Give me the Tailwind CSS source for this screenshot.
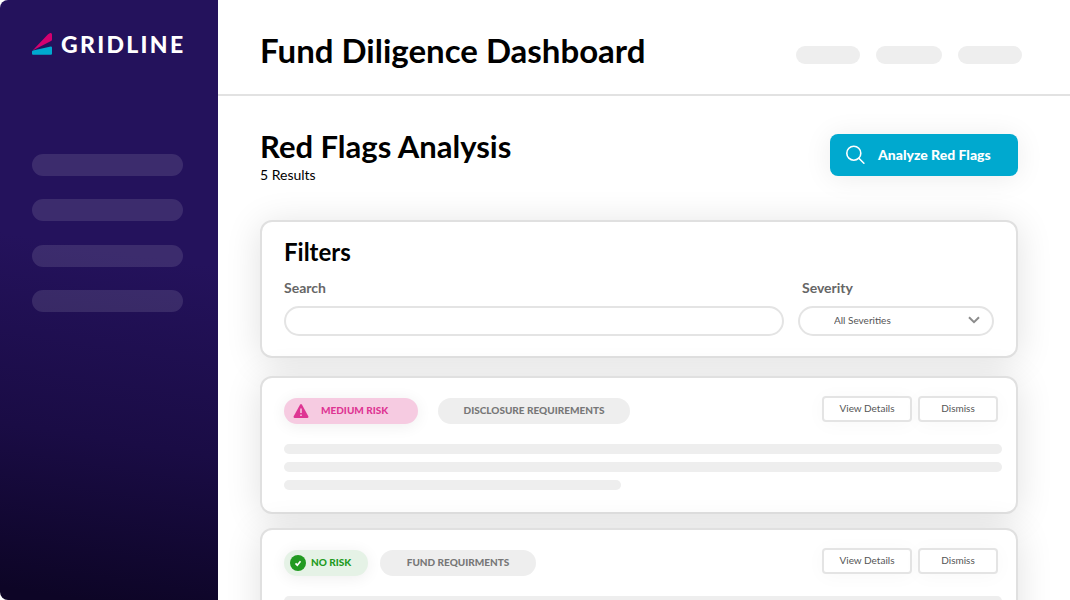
<!DOCTYPE html>
<html lang="en">
<head>
    <meta charset="UTF-8">
    <meta name="viewport" content="width=device-width, initial-scale=1.0">
    <title>Fund Diligence Dashboard</title>
    <script src="https://cdn.jsdelivr.net/npm/@tailwindcss/browser@4"></script>
</head>
<body class="flex h-screen overflow-hidden bg-white font-['Lato',sans-serif] text-black">

<!-- Sidebar -->
<aside class="w-[218px] shrink-0 rounded-l-lg bg-linear-[189deg,#24125c_42%,#1a0c45_72%,#0d0526_98%] pl-8 pr-[35px] pt-7">
    <a href="#" class="flex h-8 items-center gap-[9px] text-[23px] font-black leading-8 tracking-widest text-white">
        <svg viewBox="0 0 20 22" class="h-[22px] w-5 shrink-0">
            <path d="M.6 17.6 15.8 1.5Q19.6 -1.6 20 1.6V6.4Q20 7.6 19 8.1Z" fill="#d4006f"/>
            <path d="M1 17.4 18.8 13.6Q20 13.5 20 14.6V20.8Q20 21.8 19 21.8H1Q0 21.8 0 20.8V18.6Q0 17.6 1 17.4Z" fill="#00a9cf"/>
        </svg>
        GRIDLINE
    </a>
    <nav class="mt-[94px] flex h-[158px] flex-col justify-between" aria-label="Main">
        <a href="#" class="h-[22px] rounded-full bg-white/11"></a>
        <a href="#" class="h-[22px] rounded-full bg-white/11"></a>
        <a href="#" class="h-[22px] rounded-full bg-white/11"></a>
        <a href="#" class="h-[22px] rounded-full bg-white/11"></a>
    </nav>
</aside>

<div class="min-w-0 flex-1">
    <!-- Top bar -->
    <header class="flex h-24 items-center justify-between border-b-2 border-[#e2e2e2] pl-[42px] pr-12 pt-1.5">
        <h1 class="text-[33px] font-bold leading-10">Fund Diligence Dashboard</h1>
        <div class="mt-2.5 flex gap-4">
            <span class="h-[18px] w-16 rounded-full bg-[#eee]"></span>
            <span class="h-[18px] w-[66px] rounded-full bg-[#eee]"></span>
            <span class="h-[18px] w-16 rounded-full bg-[#eee]"></span>
        </div>
    </header>

    <main class="pl-[42px] pr-[52px] pt-8">
        <div class="flex items-start justify-between">
            <div>
                <h2 class="text-[31px] font-bold leading-9">Red Flags Analysis</h2>
                <p class="text-sm leading-[22px]">5 Results</p>
            </div>
            <button class="mt-1.5 flex h-[42px] w-[188px] items-center gap-3 rounded-lg bg-[#00a9cf] pl-4 text-sm font-black text-white shadow-[0_2px_28px_rgba(0,0,0,0.08)]">
                <svg viewBox="0 0 20 20" class="size-5" fill="none" stroke="currentColor" stroke-width="1.6" stroke-linecap="round">
                    <circle cx="7.8" cy="8.2" r="7"/>
                    <path d="m12.9 13.3 5 4.9"/>
                </svg>
                Analyze Red Flags
            </button>
        </div>

        <!-- Filters -->
        <section class="mt-[34px] h-[138px] rounded-xl border-2 border-[#e0e0e0] bg-white px-[22px] pt-3.5 shadow-[0_4px_36px_rgba(0,0,0,0.12)]">
            <h3 class="text-2xl font-bold leading-8">Filters</h3>
            <div class="mt-2.5 grid grid-cols-[1fr_196px] gap-x-3.5 gap-y-2 text-sm">
                <label for="search" class="font-bold leading-5 text-[#666]">Search</label>
                <label for="severity" class="pl-1 font-bold leading-5 text-[#666]">Severity</label>
                <input id="search" type="text" class="h-[30px] rounded-full border-2 border-[#e4e4e4] px-4">
                <div class="relative">
                    <select id="severity" class="h-[30px] w-full appearance-none rounded-full border-2 border-[#e4e4e4] pb-0.5 pl-[34px] text-[10px] text-[#555]">
                        <option>All Severities</option>
                        <option>Medium Risk</option>
                        <option>No Risk</option>
                    </select>
                    <svg viewBox="0 0 12 8" class="pointer-events-none absolute right-3.5 top-2.5 h-2 w-3" fill="none" stroke="#8c8c8c" stroke-width="2">
                        <path d="m1 1.2 5 5 5-5"/>
                    </svg>
                </div>
            </div>
        </section>

        <!-- Red flag results -->
        <article class="mt-[18px] h-[138px] rounded-xl border-2 border-[#e0e0e0] bg-white pl-[22px] pr-3.5 pt-[18px] shadow-[0_4px_36px_rgba(0,0,0,0.12)]">
            <div class="flex items-start justify-between pr-1">
                <div class="mt-0.5 flex gap-5 text-[10px] font-black">
                    <span class="flex h-[26px] w-[134px] items-center gap-3 rounded-full bg-[#f6cbe1] pl-[9px] text-[#de3593] shadow-[0_2px_16px_rgba(0,0,0,0.07)]">
                        <svg viewBox="0 0 16 14" class="h-3.5 w-4">
                            <path d="M7 .7Q8 -.5 9 .7L15.3 12.3Q15.9 13.8 14.5 13.9H1.5Q.1 13.8.7 12.3Z" fill="#de3593"/>
                            <path d="M8 4.4v4.5M8 10.6v1.5" stroke="#f6cbe1" stroke-width="1.5"/>
                        </svg>
                        <span class="pb-0.5">MEDIUM RISK</span>
                    </span>
                    <span class="flex h-[26px] w-48 items-center justify-center rounded-full bg-[#eee] pb-0.5 text-[#777]">DISCLOSURE REQUIREMENTS</span>
                </div>
                <div class="flex gap-1.5 text-[10px] text-[#555]">
                    <button class="h-[26px] w-[90px] rounded-sm border-2 border-[#e4e4e4] bg-white pb-0.5 shadow-[0_2px_20px_rgba(0,0,0,0.03)]">View Details</button>
                    <button class="h-[26px] w-20 rounded-sm border-2 border-[#e4e4e4] bg-white pb-0.5 shadow-[0_2px_20px_rgba(0,0,0,0.03)]">Dismiss</button>
                </div>
            </div>
            <div class="mt-5 flex flex-col gap-2">
                <div class="h-2.5 rounded-full bg-[#eee]"></div>
                <div class="h-2.5 rounded-full bg-[#eee]"></div>
                <div class="h-2.5 w-[47%] rounded-full bg-[#eee]"></div>
            </div>
        </article>

        <article class="mt-3.5 h-[138px] rounded-xl border-2 border-[#e0e0e0] bg-white pl-[22px] pr-3.5 pt-[18px] shadow-[0_4px_36px_rgba(0,0,0,0.12)]">
            <div class="flex items-start justify-between pr-1">
                <div class="mt-0.5 flex gap-3 text-[10px] font-black">
                    <span class="flex h-[26px] w-[84px] items-center gap-[5px] rounded-full bg-[#e5f2e6] pl-1.5 text-[#219a21] shadow-[0_2px_16px_rgba(0,0,0,0.07)]">
                        <svg viewBox="0 0 16 16" class="size-4">
                            <circle cx="8" cy="8" r="8" fill="#219a21"/>
                            <path d="m5.5 8.3 1.8 1.9 3.2-4" fill="none" stroke="#fff" stroke-width="1.7"/>
                        </svg>
                        <span class="pb-0.5">NO RISK</span>
                    </span>
                    <span class="flex h-[26px] w-[156px] items-center justify-center rounded-full bg-[#eee] pb-0.5 text-[#777]">FUND REQUIRMENTS</span>
                </div>
                <div class="flex gap-1.5 text-[10px] text-[#555]">
                    <button class="h-[26px] w-[90px] rounded-sm border-2 border-[#e4e4e4] bg-white pb-0.5 shadow-[0_2px_20px_rgba(0,0,0,0.03)]">View Details</button>
                    <button class="h-[26px] w-20 rounded-sm border-2 border-[#e4e4e4] bg-white pb-0.5 shadow-[0_2px_20px_rgba(0,0,0,0.03)]">Dismiss</button>
                </div>
            </div>
            <div class="mt-5 flex flex-col gap-2">
                <div class="h-2.5 rounded-full bg-[#eee]"></div>
                <div class="h-2.5 rounded-full bg-[#eee]"></div>
                <div class="h-2.5 w-[47%] rounded-full bg-[#eee]"></div>
            </div>
        </article>
    </main>
</div>

</body>
</html>
